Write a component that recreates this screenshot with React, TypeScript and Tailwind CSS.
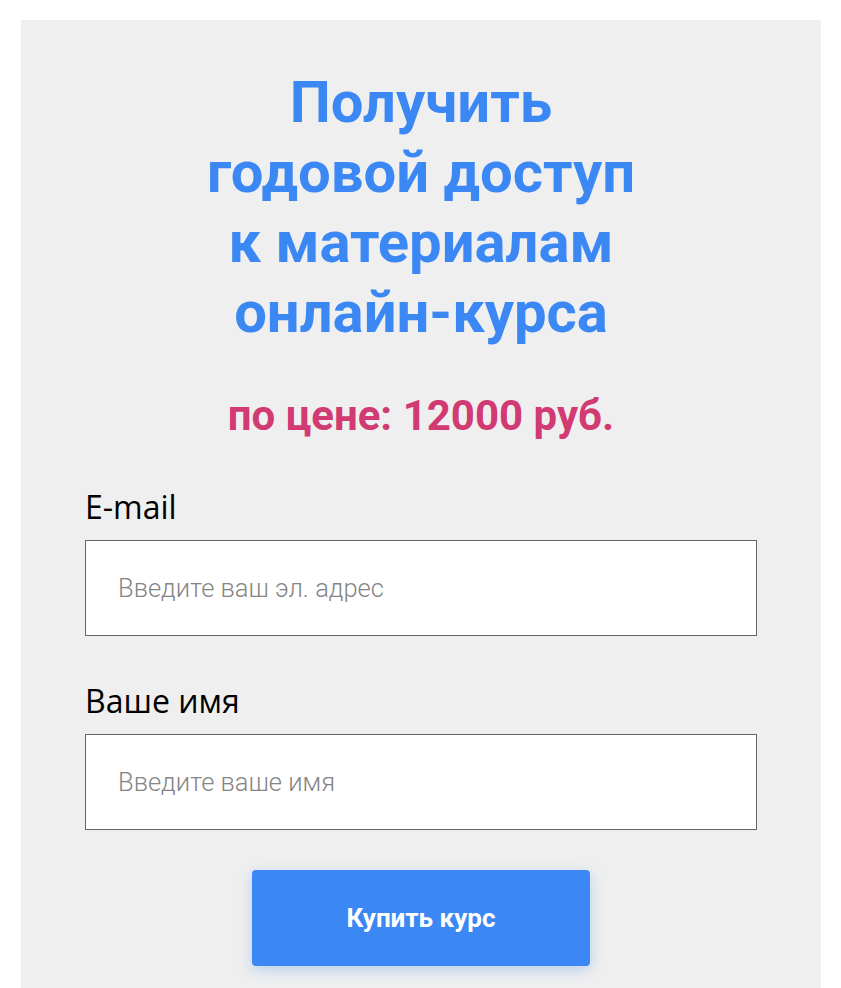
export default function App() {
  return (
    <div className="min-h-screen bg-white px-[21px] pt-5 pr-[20px]">
      <div className="bg-[#efefef] px-16 pt-[47px] pb-6 min-h-[968px]">
        <h1 className="text-center font-['Roboto',sans-serif] font-bold text-[58px] leading-[70px] text-[#3b88f5]">
          Получить
          <br />
          годовой доступ
          <br />к материалам
          <br />
          онлайн-курса
        </h1>

        <p className="mt-[45px] text-center font-['Roboto',sans-serif] font-bold text-[42px] leading-[48px] text-[#d13a72]">
          по цене: 12000 руб.
        </p>

        <form className="mt-[45px]">
          <label className="block font-['Open_Sans',sans-serif] text-[32px] leading-[44px] text-black">
            E-mail
          </label>
          <input
            type="email"
            placeholder="Введите ваш эл. адрес"
            className="mt-[11px] block w-full h-[96px] border border-[#666] bg-white px-8 font-['Roboto',sans-serif] font-light text-[25.5px] placeholder:text-[#858585] outline-none"
          />

          <label className="mt-[43px] block font-['Open_Sans',sans-serif] text-[32px] leading-[44px] text-black">
            Ваше имя
          </label>
          <input
            type="text"
            placeholder="Введите ваше имя"
            className="mt-[11px] block w-full h-[96px] border border-[#666] bg-white px-8 font-['Roboto',sans-serif] font-light text-[25.5px] placeholder:text-[#858585] outline-none"
          />

          <div className="mt-10 flex justify-center">
            <button
              type="button"
              className="w-[338px] h-[96px] rounded-[4px] bg-[#3b88f5] font-['Roboto',sans-serif] font-bold text-[26px] text-white shadow-[0_4px_14px_rgba(59,136,245,0.3)]"
            >
              Купить курс
            </button>
          </div>
        </form>
      </div>
    </div>
  );
}
